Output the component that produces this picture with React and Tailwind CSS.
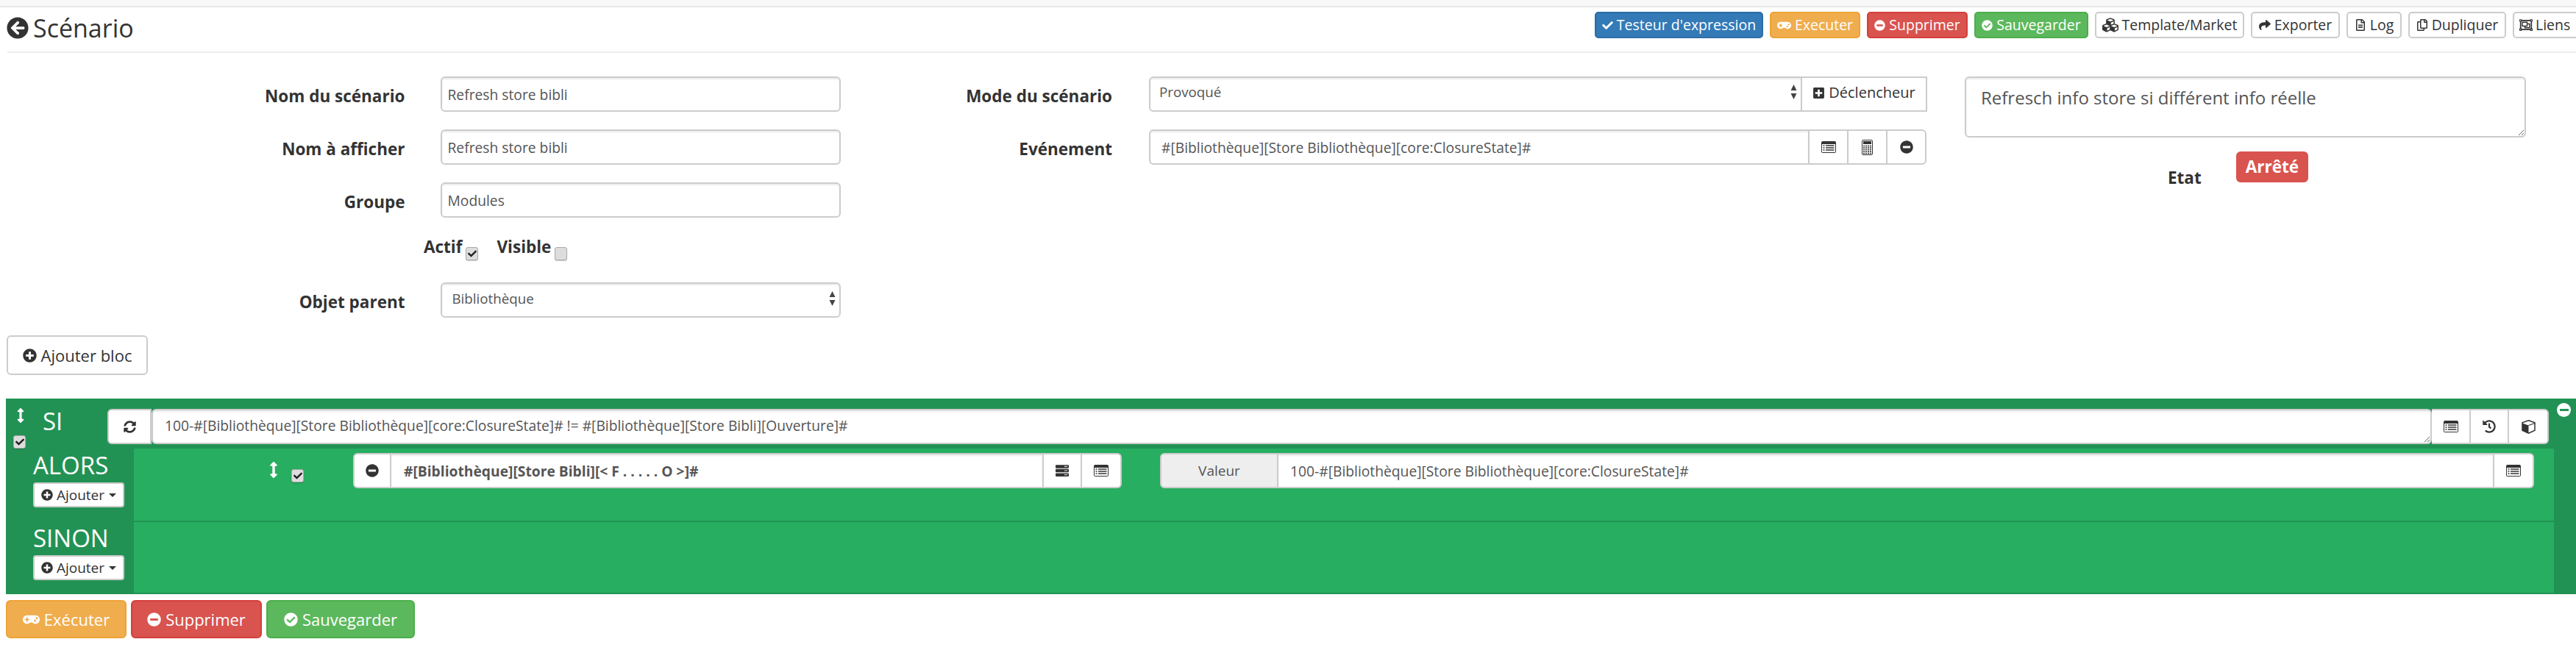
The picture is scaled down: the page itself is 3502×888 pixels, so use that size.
import {
  FaArrowCircleLeft,
  FaCheck,
  FaGamepad,
  FaMinusCircle,
  FaCheckCircle,
  FaCubes,
  FaShare,
  FaRegFileAlt,
  FaRegCopy,
  FaRegObjectGroup,
  FaPlusSquare,
  FaPlusCircle,
  FaSyncAlt,
  FaHistory,
  FaServer,
  FaArrowsAltV,
} from "react-icons/fa";

const topBtn =
  "h-[36px] shrink-0 flex items-center justify-center gap-[5px] rounded-[5px] border-2 text-[19.5px] leading-none";
const whiteBtn = `${topBtn} bg-white border-[#ccc] text-[#333]`;
const inputCls =
  "h-[48px] border-2 border-[#ccc] bg-white text-[19.25px] text-[#555] shadow-[inset_0_2px_2px_rgba(0,0,0,0.075)] outline-none";
const addonBase =
  "h-full flex items-center justify-center text-[18px] border-2 border-[#ccc]";
const addon = `${addonBase} bg-white text-[#333]`;
const labelCls = "text-right font-bold text-[22.5px] text-[#333] pt-[5px]";

// label + champ de la colonne de gauche
const Field = ({ label, value }) => (
  <div className="flex items-center h-[48px] mb-[24px]">
    <label className={`${labelCls} w-[551px]`}>{label}</label>
    <input
      readOnly
      value={value}
      className={`${inputCls} w-[544px] ml-[49px] rounded-[6px] pl-[7px]`}
    />
  </div>
);

const Check = ({ checked }) => (
  <span className="w-[17px] h-[18px] flex items-center justify-center rounded-[3px] border border-[#aaa] bg-[#ddd] shadow-[0_1px_1px_rgba(0,0,0,0.2)] text-[#222] text-[12px]">
    {checked && <FaCheck />}
  </span>
);

const Arrows = () => (
  <svg width="9" height="24" viewBox="0 0 9 24" className="text-[#444]">
    <path d="M4.5 2 L8.5 10 H0.5 Z M4.5 22 L8.5 14 H0.5 Z" fill="currentColor" />
  </svg>
);

// list-alt de font awesome 4
const ListAlt = () => (
  <svg width="20" height="16" viewBox="0 0 20 16">
    <rect x="0" y="0" width="20" height="16" rx="2" fill="#333" />
    <rect x="1" y="4" width="18" height="11" fill="#fff" />
    <path d="M2.5 6h2M2.5 9h2M2.5 12h2M6 6h11.5M6 9h11.5M6 12h11.5" stroke="#333" strokeWidth="1.4" />
  </svg>
);

const Calc = () => (
  <svg width="15" height="21" viewBox="0 0 15 21">
    <rect x="0.5" y="0.5" width="14" height="20" rx="1.5" fill="#fff" stroke="#333" />
    <rect x="2" y="2" width="11" height="4" fill="#333" />
    <path d="M2 8.5h11M2 11h11M2 13.5h11M2 16h11M2 18.5h11" stroke="#333" strokeWidth="1.5" />
    <path d="M4.5 7v13M7.5 7v13M10.5 7v13" stroke="#fff" strokeWidth="0.9" />
  </svg>
);

const Cube = () => (
  <svg width="19" height="19" viewBox="0 0 19 19">
    <path d="M9.5 0.8 L18 3.8 V14.2 L9.5 18.2 L1 14.2 V3.8 Z" fill="#fff" stroke="#333" strokeWidth="1.5" />
    <path d="M1 4.5 L9.5 7.5 V18 L1 14.2 Z" fill="#333" />
    <path d="M9.5 7.5 L18 4.5" stroke="#333" strokeWidth="1.2" />
  </svg>
);

const AjouterBtn = () => (
  <button className="w-[124px] h-[34px] flex items-center justify-center gap-[5px] rounded-[4px] bg-white border-2 border-[#ccc] text-[#333] text-[19px] leading-none">
    <FaPlusCircle className="text-[16px]" />
    Ajouter
    <span className="ml-[1px] border-x-[5px] border-x-transparent border-t-[5px] border-t-[#333]" />
  </button>
);

const App = () => {
  return (
    <div className="w-[3502px] h-[888px] overflow-hidden bg-white font-['Open_Sans',sans-serif]">
      <div className="h-[10px] bg-[#f8f8f8] border-b-2 border-[#e7e7e7]" />

      {/* barre du haut */}
      <div className="ml-[10px] h-[62px] border-b-2 border-[#eee] flex items-start">
        <div className="flex items-center shrink-0 h-[60px] w-[2148px] -ml-[1px] pb-[4px] text-[#333]">
          <FaArrowCircleLeft className="text-[30px] shrink-0" />
          <span className="ml-[6px] text-[34px] leading-none">Scénario</span>
        </div>
        <div className="flex gap-[9px] pt-[6px] ml-[11px]">
          <button className={`${topBtn} w-[229px] bg-[#337ab7] border-[#2e6da4] text-white`}>
            <FaCheck className="text-[15px]" />
            Testeur d'expression
          </button>
          <button className={`${topBtn} w-[123px] bg-[#f0ad4e] border-[#eea236] text-white`}>
            <FaGamepad className="text-[19px]" />
            Executer
          </button>
          <button className={`${topBtn} w-[137px] bg-[#d9534f] border-[#d43f3a] text-white`}>
            <FaMinusCircle className="text-[15px]" />
            Supprimer
          </button>
          <button className={`${topBtn} w-[155px] bg-[#5cb85c] border-[#4cae4c] text-white`}>
            <FaCheckCircle className="text-[15px]" />
            Sauvegarder
          </button>
          <button className={`${whiteBtn} w-[203px]`}>
            <FaCubes className="text-[22px]" />
            Template/Market
          </button>
          <button className={`${whiteBtn} w-[121px]`}>
            <FaShare className="text-[16px]" />
            Exporter
          </button>
          <button className={`${whiteBtn} w-[75px]`}>
            <FaRegFileAlt className="text-[16px]" />
            Log
          </button>
          <button className={`${whiteBtn} w-[133px]`}>
            <FaRegCopy className="text-[16px]" />
            Dupliquer
          </button>
          <button className={`${whiteBtn} w-[110px] !justify-start pl-[7px] !gap-[4px]`}>
            <FaRegObjectGroup className="text-[18px]" />
            Liens
          </button>
        </div>
      </div>

      {/* formulaire */}
      <div className="flex mt-[32px] h-[438px]">
        <div className="w-[1143px] shrink-0">
          <Field label="Nom du scénario" value="Refresh store bibli" />
          <Field label="Nom à afficher" value="Refresh store bibli" />
          <Field label="Groupe" value="Modules" />
          <div className="flex items-start h-[40px] mb-[24px] pl-[576px] font-bold text-[22.5px] text-[#333] leading-none">
            <span className="mt-[5px]">Actif</span>
            <span className="ml-[5px] mt-[16px]">
              <Check checked />
            </span>
            <span className="ml-[25px] mt-[5px]">Visible</span>
            <span className="ml-[5px] mt-[16px]">
              <Check />
            </span>
          </div>
          <div className="flex items-center h-[48px]">
            <label className={`${labelCls} w-[551px]`}>Objet parent</label>
            <div className={`${inputCls} w-[544px] ml-[49px] rounded-[6px] flex items-center justify-between pl-[13px] pr-[5px] pb-[4px] !text-[18.75px]`}>
              Bibliothèque
              <Arrows />
            </div>
          </div>
          <button className="ml-[9px] mt-[24px] w-[192px] h-[54px] flex items-center justify-center gap-[6px] rounded-[6px] bg-white border-2 border-[#ccc] text-[#333] text-[22px]">
            <FaPlusCircle className="text-[19px]" />
            Ajouter bloc
          </button>
        </div>

        <div className="w-[1477px] shrink-0">
          <div className="flex items-center h-[48px] mb-[24px]">
            <label className={`${labelCls} w-[369px]`}>Mode du scénario</label>
            <div className={`${inputCls} w-[888px] ml-[50px] rounded-l-[6px] flex items-center justify-between pl-[12px] pr-[5px] pb-[6px] !text-[18.75px]`}>
              Provoqué
              <Arrows />
            </div>
            <div className={`${addon} w-[170px] border-l-0 gap-[5px] pb-[4px] !text-[20px]`}>
              <FaPlusSquare className="text-[17px]" />
              Déclencheur
            </div>
          </div>
          <div className="flex items-center h-[48px]">
            <label className={`${labelCls} w-[369px]`}>Evénement</label>
            <input
              readOnly
              value="#[Bibliothèque][Store Bibliothèque][core:ClosureState]#"
              className={`${inputCls} w-[898px] ml-[50px] rounded-l-[6px] pl-[15px]`}
            />
            <div className={`${addon} w-[53px] border-l-0`}>
              <ListAlt />
            </div>
            <div className={`${addon} w-[53px] border-l-0`}>
              <Calc />
            </div>
            <div className={`${addon} w-[53px] border-l-0 rounded-r-[6px]`}>
              <FaMinusCircle />
            </div>
          </div>
        </div>

        <div className="ml-[51px] w-[763px] shrink-0">
          <textarea
            readOnly
            value="Refresch info store si différent info réelle"
            className="w-full h-[83px] block rounded-[6px] border-2 border-[#ccc] px-[20px] py-[12px] text-[24px] leading-[30px] text-[#555] shadow-[inset_0_2px_2px_rgba(0,0,0,0.075)] outline-none"
          />
          <div className="flex items-start mt-[19px] pl-[276px]">
            <span className="mt-[22px] w-[93px] font-bold text-[22.5px] leading-[28px] text-[#333]">
              Etat
            </span>
            <span className="w-[98px] h-[42px] flex items-center justify-center rounded-[6px] bg-[#d9534f] text-white font-bold text-[22.5px]">
              Arrêté
            </span>
          </div>
        </div>
      </div>

      {/* bloc SI / ALORS / SINON */}
      <div className="ml-[8px] h-[266px] bg-[#229254] flex flex-col relative">
        <div className="h-[68px] flex pt-[14px]">
          <div className="w-[138px] shrink-0 flex text-white">
            <div className="w-[50px] pl-[10px] flex flex-col">
              <FaArrowsAltV className="text-[22px] -ml-[1px] -mt-[1px]" />
              <span className="mt-[17px] block">
                <Check checked />
              </span>
            </div>
            <span className="text-[33px] leading-[46px] -mt-[6px]">SI</span>
          </div>
          <div className="h-[48px] flex w-[3319px]">
            <div className={`${addon} w-[60px] rounded-l-[6px]`}>
              <FaSyncAlt className="text-[17px]" />
            </div>
            <textarea
              readOnly
              value="100-#[Bibliothèque][Store Bibliothèque][core:ClosureState]# != #[Bibliothèque][Store Bibli][Ouverture]#"
              className={`${inputCls} flex-1 rounded-[6px] pl-[16px] pt-[8px] leading-[26px]`}
            />
            <div className={`${addon} w-[53px] border-l-0`}>
              <ListAlt />
            </div>
            <div className={`${addon} w-[52px] border-l-0`}>
              <FaHistory />
            </div>
            <div className={`${addon} w-[54px] border-l-0 rounded-r-[6px]`}>
              <Cube />
            </div>
          </div>
        </div>

        <div className="flex flex-1">
          <div className="w-[174px] shrink-0 pl-[37px] text-white">
            <div className="h-[98px]">
              <div className="text-[33px] leading-[46px]">ALORS</div>
              <AjouterBtn />
            </div>
            <div className="h-[98px] pt-[1px]">
              <div className="text-[33px] leading-[46px]">SINON</div>
              <AjouterBtn />
            </div>
          </div>

          <div className="w-[3290px] shrink-0 flex flex-col mb-[2px]">
            <div className="h-[98px] bg-[#27ae60] flex items-start pt-[6px]">
              <div className="w-[188px] pt-[12px] pl-[180px] shrink-0 text-white">
                <FaArrowsAltV className="text-[22px] -ml-[1px]" />
              </div>
              <div className="mt-[22px] ml-[26px] w-[17px] shrink-0">
                <Check checked />
              </div>
              <div className="ml-[67px] h-[48px] flex w-[1045px] shrink-0">
                <div className={`${addon} w-[52px] rounded-l-[6px]`}>
                  <FaMinusCircle />
                </div>
                <input
                  readOnly
                  value="#[Bibliothèque][Store Bibli][< F . . . . . O >]#"
                  className={`${inputCls} flex-1 min-w-0 border-l-0 pl-[17px] font-bold text-[#444]`}
                />
                <div className={`${addon} w-[52px] border-l-0`}>
                  <FaServer />
                </div>
                <div className={`${addon} w-[54px] border-l-0 rounded-r-[6px]`}>
                  <ListAlt />
                </div>
              </div>
              <div className="ml-[52px] h-[48px] flex w-[1868px] shrink-0">
                <div className={`${addonBase} w-[161px] bg-[#eee] text-[#555] !text-[19px] rounded-l-[6px]`}>
                  Valeur
                </div>
                <input
                  readOnly
                  value="100-#[Bibliothèque][Store Bibliothèque][core:ClosureState]#"
                  className={`${inputCls} flex-1 min-w-0 border-l-0 pl-[16px]`}
                />
                <div className={`${addon} w-[54px] border-l-0 rounded-r-[6px]`}>
                  <ListAlt />
                </div>
              </div>
            </div>
            <div className="h-[2px] bg-[#229254]" />
            <div className="flex-1 bg-[#27ae60]" />
          </div>
        </div>

        {/* bouton retirer le bloc */}
        <span className="absolute right-[7px] top-[6px] w-[19px] h-[19px] rounded-full bg-white flex items-center justify-center">
          <span className="w-[12px] h-[3px] bg-[#229254]" />
        </span>
      </div>

      {/* actions du bas */}
      <div className="ml-[8px] mt-[8px] flex gap-[6px]">
        <button className="w-[164px] h-[52px] flex items-center justify-center gap-[6px] rounded-[6px] bg-[#f0ad4e] border-2 border-[#eea236] text-white text-[22px]">
          <FaGamepad className="text-[23px]" />
          Exécuter
        </button>
        <button className="w-[178px] h-[52px] flex items-center justify-center gap-[6px] rounded-[6px] bg-[#d9534f] border-2 border-[#d43f3a] text-white text-[22px]">
          <FaMinusCircle className="text-[19px]" />
          Supprimer
        </button>
        <button className="w-[202px] h-[52px] flex items-center justify-center gap-[6px] rounded-[6px] bg-[#5cb85c] border-2 border-[#4cae4c] text-white text-[22px]">
          <FaCheckCircle className="text-[19px]" />
          Sauvegarder
        </button>
      </div>
    </div>
  );
};

export default App;
